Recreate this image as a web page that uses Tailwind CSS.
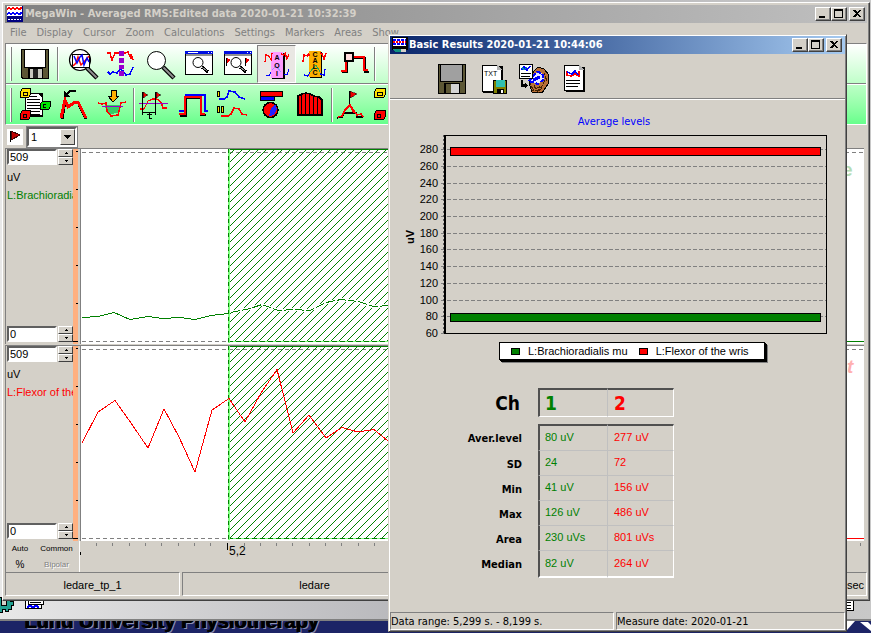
<!DOCTYPE html>
<html lang="en">
<head>
<meta charset="utf-8">
<title>MegaWin</title>
<script src="https://cdn.jsdelivr.net/npm/@tailwindcss/browser@4"></script>
</head>
<body class="font-['Liberation_Sans',Arial,sans-serif] text-[11px] leading-4 text-black">
<div class="relative min-h-screen overflow-hidden bg-[#1c2466]">

<!-- Window behind the main one -->
<div class="absolute inset-0 flex flex-col">
  <div class="flex flex-1 items-end justify-between border-b-2 border-[#808080] bg-linear-to-r from-[#e8e8e8] via-[#b4b4b8] to-[#c8c8c8] pb-1.5">
    <svg class="h-4 w-12" viewBox="0 598 48 16" shape-rendering="crispEdges" aria-hidden="true">
      <g fill="#20a090" stroke="#000"><path d="M-4 598H10V602H13V606H11V610H8V612H5V610H2V613H-2z"/></g><rect x="1" y="599" width="5" height="7" fill="#d4d0c8" stroke="#000"/>
      <rect x="25" y="598" width="16" height="11" fill="#fff" stroke="#000"/><path d="M28 601H43V605H28z" fill="#fff" stroke="#000"/><path d="M30 603H41" stroke="#000"/><path d="M27 608l3-1 3 1 3-1 3 1" stroke="#00f" fill="none" stroke-width="2"/>
    </svg>
    <svg class="mr-4 h-4 w-3" viewBox="0 0 12 16" shape-rendering="crispEdges" aria-hidden="true"><rect x="1" y="1" width="9" height="12" fill="#fff" stroke="#000"/><path d="M3 5H8M3 8H8M3 11H8" stroke="#000"/><path d="M3 3H6" stroke="#20a090"/></svg>
  </div>
  <div class="relative h-3 overflow-hidden">
    <p class="absolute bottom-0.5 left-6 whitespace-nowrap text-[20px] leading-5 font-bold text-black [text-shadow:1px_0_#000,2px_1px_#ffffff80]">Lund University Physiotherapy</p>
    <svg class="absolute right-0 top-0 h-3 w-7" viewBox="0 0 28 12" aria-hidden="true"><path d="M0 0h12L4 9 0 5z" fill="#fff"/><path d="M17 1h8l3 3v6z" fill="#fff"/></svg>
  </div>
</div>

<!-- Main window -->
<main class="absolute top-0.5 right-px bottom-8 left-0.5 flex flex-col border border-t-white border-r-[#404040] border-b-[#404040] border-l-white bg-[#d4d0c8] p-0.5 shadow-[inset_-1px_-1px_#808080]">
  <header class="flex h-[18px] shrink-0 items-center bg-linear-to-r from-[#808080] to-[#c0c0c0] px-0.5">
    <svg class="mr-0.5 size-4" viewBox="0 0 16 16" shape-rendering="crispEdges" aria-hidden="true"><rect width="16" height="16" fill="#000080"/><rect x="0" y="0" width="15" height="10" fill="#fff"/><path d="M0 3l2-1 2 1 2-1 2 1 2-1 2 1 3-1" stroke="#f00" stroke-width="2" fill="none"/><path d="M0 8l2-1 2 1 2-1 2 1 2-1 2 1 3-1" stroke="#00f" stroke-width="2" fill="none"/><path d="M1 13H14" stroke="#fff" stroke-dasharray="2 1"/></svg>
    <h1 class="flex-1 whitespace-nowrap font-['DejaVu_Sans_Condensed','DejaVu_Sans',sans-serif] text-[11px] font-bold text-[#d4d0c8]">MegaWin - Averaged RMS:Edited data 2020-01-21 10:32:39</h1>
    <button aria-label="Minimize" class="h-3.5 w-4 border border-t-white border-r-[#404040] border-b-[#404040] border-l-white bg-[#d4d0c8] shadow-[inset_-1px_-1px_#808080]"><svg class="block h-3 w-3.5" viewBox="0 0 14 12" shape-rendering="crispEdges"><path d="M3 8h6v2H3z"/></svg></button>
    <button aria-label="Maximize" class="mr-0.5 h-3.5 w-4 border border-t-white border-r-[#404040] border-b-[#404040] border-l-white bg-[#d4d0c8] shadow-[inset_-1px_-1px_#808080]"><svg class="block h-3 w-3.5" viewBox="0 0 14 12" shape-rendering="crispEdges"><path fill-rule="evenodd" d="M2 1h9v9H2zM3 3v6h7V3z"/></svg></button>
    <button aria-label="Close" class="h-3.5 w-4 border border-t-white border-r-[#404040] border-b-[#404040] border-l-white bg-[#d4d0c8] shadow-[inset_-1px_-1px_#808080]"><svg class="block h-3 w-3.5" viewBox="0 0 14 12" shape-rendering="crispEdges"><path d="M3 2h2l2 2 2-2h2L8 5.500l3 3.500H9L7 7 5 9H3l3-3.500z"/></svg></button>
  </header>
  <nav class="flex h-5 shrink-0 items-center gap-2.5 px-[5px] font-['DejaVu_Sans_Condensed','DejaVu_Sans',sans-serif] text-[11px] text-[#808080]">
    <a href="#">File</a><a href="#">Display</a><a href="#">Cursor</a><a href="#">Zoom</a><a href="#">Calculations</a><a href="#">Settings</a><a href="#">Markers</a><a href="#">Areas</a><a href="#">Show</a>
  </nav>

  <div class="shrink-0 border border-t-[#808080] border-r-white border-b-white border-l-[#808080] bg-linear-to-b from-white to-[#66ff8c]">
    <div class="flex h-[39px] items-center pl-1">
      <span class="mr-[3px] h-[34px] w-0.5 border-r border-l border-r-[#808080] border-l-white"></span>
      <button aria-label="Save"><svg class="block h-[38px] w-[39px]" viewBox="15 45 39 38" shape-rendering="crispEdges"><path d="M21 49H49V79H22L21 78z"/><path d="M22 50H48V78H23L22 77z" fill="#5c5735"/><path d="M24 49H46V68H24z"/><path d="M25 50H45V67H25z" fill="#fff"/><path d="M28 68H43V79H28z"/><path d="M30 69H42V78H30z" fill="#c8c8c0"/><path d="M33 69H38V78H33z" fill="#222"/></svg></button>
      <span class="mx-[3px] h-[34px] w-0.5 border-r border-l border-r-white border-l-[#808080]"></span>
      <button aria-label="Zoom signal"><svg class="block h-[38px] w-[39px]" viewBox="62 45 39 38"><circle cx="80" cy="60" r="10.500" fill="#fff" stroke="#000" stroke-width="1.200"/><path d="M87 68l10 10" stroke="#000" stroke-width="4.500"/><path d="M87 68l9.500 9.500" stroke="#909090" stroke-width="2"/><rect x="72.500" y="54.500" width="17" height="13" fill="#fff" stroke="#000"/><path d="M73 66l3-3 2-6 3 8 3-3 5-6" stroke="#f00" fill="none" stroke-width="1.500"/><path d="M74 56l3 7 3-6 2-2 2 10 3-7 2 4" stroke="#00f" fill="none" stroke-width="1.500"/></svg></button>
      <button aria-label="Signals"><svg class="block h-[38px] w-[39px]" viewBox="101 45 39 38" shape-rendering="crispEdges"><path d="M107 53l3 0 2 7 3-7h4l3-1 3 1 3-1 3 7v-5l2 6" stroke="#f00" fill="none" stroke-width="1.500"/><path d="M108 72l2 2 3-2 4 1 3-4 3 2 3 4 4-1 3-7" stroke="#00f" fill="none" stroke-width="1.500"/><path d="M119 51h5v5h-5zM119 58h5v5h-5zM119 65h5v4h-5zM119 71h5v5h-5z" fill="#9900cc"/></svg></button>
      <button aria-label="Zoom"><svg class="block h-[38px] w-[39px]" viewBox="140 45 39 38"><circle cx="156.500" cy="60.500" r="9" fill="#fff" stroke="#000"/><path d="M163 67l11 11" stroke="#000" stroke-width="4.500"/><path d="M163.500 67.500l10 10" stroke="#909090" stroke-width="2"/></svg></button>
      <button aria-label="Zoom window"><svg class="block h-[38px] w-[39px]" viewBox="179 45 39 38" shape-rendering="crispEdges"><path d="M185 51h28v24h-28z"/><path d="M186 55h26v19h-26z" fill="#fff"/><path d="M185 51h28v3h-28z" fill="#0010e0"/><path d="M186 54h26v2h-26z" fill="#909090"/><path d="M208 52h1v1h-1zM211 52h1v1h-1zM188 52h10v1h-10z" fill="#fff"/><circle cx="198" cy="62.500" r="5" fill="#fff" stroke="#000" shape-rendering="auto"/><path d="M202 67l6 5" stroke="#000" stroke-width="3"/><path d="M202 67l5 4" stroke="#888"/></svg></button>
      <button aria-label="Zoom markers"><svg class="block h-[38px] w-[39px]" viewBox="218 45 39 38" shape-rendering="crispEdges"><path d="M224 51h28v24h-28z"/><path d="M225 55h26v19h-26z" fill="#fff"/><path d="M224 51h28v3h-28z" fill="#0010e0"/><path d="M225 54h26v2h-26z" fill="#909090"/><path d="M247 52h1v1h-1zM250 52h1v1h-1z" fill="#fff"/><circle cx="236" cy="62.500" r="5" fill="#fff" stroke="#000" shape-rendering="auto"/><path d="M240 67l6 5" stroke="#000" stroke-width="3"/><path d="M240 67l5 4" stroke="#888"/><path d="M226.500 58v8M245.500 58v8" stroke="#000"/><path d="M227 58l4 2-4 3zM246 58l4 2-4 3z" fill="#e00"/></svg></button>
      <button aria-label="AOI" aria-pressed="true" class="border border-t-[#808080] border-r-white border-b-white border-l-[#808080] bg-[#e9e7e3]"><svg class="block h-9 w-[37px]" viewBox="258 46 37 36" shape-rendering="crispEdges"><path d="M272 53h13v26h-13z"/><path d="M271 52h12v26h-12z" fill="#ff99ff"/><path d="M265 62l1-7 3 1 2 4 1-7M281 54l3 1 1-2 2 6 2-5" stroke="#f00" fill="none" stroke-width="1.300"/><path d="M266 75l3 1 2-4M284 74l3 1 2-6" stroke="#00f" fill="none"/><path d="M272 70l4-4 5 6" stroke="#99f" fill="none"/><g font-size="7" font-weight="bold" text-anchor="middle"><text x="277" y="60">A</text><text x="277" y="68">O</text><text x="277" y="76">I</text></g></svg></button>
      <button aria-label="Calc"><svg class="block h-[38px] w-[39px]" viewBox="296 45 39 38" shape-rendering="crispEdges"><path d="M310 52h12v26h-12z"/><path d="M309 51h12v26h-12z" fill="#ffb000"/><path d="M303 62l1-7 4 1M308 54l2 2M320 53l2 1 2 5 2-6" stroke="#f00" fill="none" stroke-width="1.500"/><path d="M304 75l4 1 2-4M320 74l4 1 1-6" stroke="#00f" fill="none" stroke-width="1.300"/><path d="M310 72l6-7 4 7" stroke="#2a5" fill="none"/><g font-size="7" font-weight="bold" text-anchor="middle"><text x="315" y="57">C</text><text x="315" y="63">A</text><text x="315" y="69">L</text><text x="315" y="75">C</text></g></svg></button>
      <button aria-label="Edit level"><svg class="block h-[38px] w-[39px]" viewBox="335 45 39 38" shape-rendering="crispEdges"><path d="M342 72h5V58h18v14h4" stroke="#000" stroke-width="2" fill="none"/><path d="M341 71h5V57h18v13h4" stroke="#f00" stroke-width="2" fill="none"/><path d="M345 53h8v8h-8z" fill="#fdd" stroke="#000" stroke-width="2"/></svg></button>
      <span class="h-[34px] w-0.5 border-r border-l border-r-white border-l-[#808080]"></span>
    </div>
    <div class="h-0.5 border-t border-b border-t-[#808080] border-b-white"></div>
    <div class="flex h-[39px] items-center pl-1">
      <span class="mr-[3px] h-[34px] w-0.5 border-r border-l border-r-[#808080] border-l-white"></span>
      <button aria-label="Report"><svg class="block h-[38px] w-[39px]" viewBox="15 86 39 38" shape-rendering="crispEdges"><path d="M26 93h17v24H26z"/><path d="M25.500 93.500h13l4 4v18h-17z" fill="#fff" stroke="#000"/><path d="M27 96.500h10M27 99.500h13M27 102.500h13M27 105.500h13M27 108.500h13M27 111.500h13M27 114.500h13" stroke="#000"/><path d="M20.500 91.500l2-3h8v6l-2 3h-8z" fill="#ffe000" stroke="#000"/><path d="M23 92.500h4v3h-4z" fill="none" stroke="#000"/><path d="M40.500 103.500l2-2h8v5l-2 3h-8z" fill="#00e800" stroke="#000"/><path d="M46 104.500h-3v3h3" fill="none" stroke="#000"/><path d="M20.500 113.500l2-3h8v6l-2 3h-8z" fill="#f00" stroke="#000"/><path d="M23 114.500h3v3h-3z" fill="none" stroke="#000"/></svg></button>
      <button aria-label="Slope"><svg class="block h-[38px] w-[39px]" viewBox="54 86 39 38" shape-rendering="crispEdges"><path d="M62 119l3-18 3 6 7-5h3l8 17" stroke="#000" stroke-width="3" fill="none"/><path d="M61 118l4-18 3 7 7-5h3l8 16" stroke="#f00" stroke-width="3" fill="none"/><path d="M76 91h-6l-4 4" stroke="#000" stroke-width="2" fill="none"/><path d="M64 91v6h7z"/></svg></button>
      <button aria-label="Import dip"><svg class="block h-[38px] w-[39px]" viewBox="93 86 39 38" shape-rendering="crispEdges"><path d="M105 105h15l-2 8-9 1-3-3z" fill="#3c6"/><path d="M98 103l4 1 4-1 1 8 4 5 7-1 3-12 5-1" stroke="#f00" fill="none" stroke-width="1.500"/><path d="M102 106.500h21" stroke="#90c"/><path d="M111 90h5v6h3l-6 6-5-6h3z" fill="#ffb000" stroke="#000"/></svg></button>
      <span class="mr-0.5 ml-px h-[34px] w-0.5 border-r border-l border-r-white border-l-[#808080]"></span>
      <button aria-label="Interval"><svg class="block h-[38px] w-[39px]" viewBox="137 86 39 38" shape-rendering="crispEdges"><path d="M140 109h4l4-8 5-2h4l4 3 2 6h4" stroke="#f00" fill="none" stroke-width="1.300"/><path d="M139 103.500h29" stroke="#90c"/><path d="M142.500 92v23M155.500 92v23M142 112.500h13M149 113v5M147 114h5M149 118h3" stroke="#000" fill="none"/><path d="M143 92l5 3-5 3zM156 92l5 3-5 3z" fill="#e00" stroke="#000" stroke-width=".5"/></svg></button>
      <button aria-label="Compare levels"><svg class="block h-[38px] w-[39px]" viewBox="176 86 39 38" shape-rendering="crispEdges"><path d="M179 111h4l3-1V95h19v16h3" stroke="#00f" stroke-width="2" fill="none"/><path d="M180 116h6V98h15v17h5" stroke="#000" stroke-width="2" fill="none"/><path d="M179 114h6V97h16v17h4" stroke="#f00" stroke-width="1.500" fill="none"/></svg></button>
      <button aria-label="Split curves"><svg class="block h-[38px] w-[39px]" viewBox="215 86 39 38" shape-rendering="crispEdges"><path d="M219 99h5l3-2 2-6 6 1 4 5 6 2" stroke="#00f" fill="none" stroke-width="1.500"/><path d="M221 116h7l3-2 3-6 5 1 3 5 5 1" stroke="#f00" fill="none" stroke-width="1.500"/><path d="M217.500 91.500h2v5h-2zM217.500 106.500h2v6h-2zM221.500 106.500h2v6h-2z" fill="#ffe000" stroke="#000"/></svg></button>
      <button aria-label="Pie chart"><svg class="block h-[38px] w-[39px]" viewBox="254 86 39 38" shape-rendering="crispEdges"><path d="M260.500 91.500h22v5h-22z" fill="#f00" stroke="#000"/><path d="M260.500 96.500h14v4h-14z" fill="#00f" stroke="#000"/><circle cx="270.500" cy="110" r="7.500" fill="#f00" stroke="#000" stroke-width="1.500"/><path d="M269 116l2-8 4-4 2 5-3 6z" fill="#22f"/></svg></button>
      <button aria-label="Histogram"><svg class="block h-[38px] w-[38px]" viewBox="293 86 38 38" shape-rendering="crispEdges"><path d="M298 115V96l4-2 4-1 4 1 4 2 5 1 3 3v15z" fill="#f00" stroke="#000" stroke-width="1.500"/><path d="M301.500 95v20M305.500 94v21M309.500 94v21M313.500 96v19M317.500 97v18" stroke="#000"/></svg></button>
      <span class="mr-px h-[34px] w-0.5 border-r border-l border-r-white border-l-[#808080]"></span>
      <button aria-label="Marker peak"><svg class="block h-[38px] w-[39px]" viewBox="334 86 39 38" shape-rendering="crispEdges"><path d="M337 118l5-1 2-4 4 0M348 113h8l1 4h6" stroke="#000" fill="none" stroke-width="1.500"/><path d="M338 117l4-1 3-6 5-5 4 6 3 4 4-1 2 3M350 105l4 8" stroke="#f00" fill="none" stroke-width="1.500"/><path d="M349.500 91v13" stroke="#000"/><path d="M350 91l7 3-7 4z" fill="#e00" stroke="#000" stroke-width=".5"/></svg></button>
      <button aria-label="Channels"><svg class="block h-[38px] w-[39px]" viewBox="373 86 39 38" shape-rendering="crispEdges"><path d="M374.500 91.500l2-3h9v6l-2 3h-9z" fill="#ffe000" stroke="#000"/><path d="M377 92.500h5v3h-5z" fill="none" stroke="#000"/><path d="M374.500 113.500l2-3h9v6l-2 3h-9z" fill="#f00" stroke="#000"/><path d="M377 114.500h3v3h-3z" fill="none" stroke="#000"/></svg></button>
    </div>
  </div>

  <div class="flex h-[23px] shrink-0 items-center pl-0.5">
    <button aria-label="Marker" class="mr-1 bg-white"><svg class="block size-4" viewBox="0 0 16 16" shape-rendering="crispEdges"><path d="M3.500 2v11" stroke="#000"/><path d="M4 2l9 4-9 5z" fill="#c00000" stroke="#400"/></svg></button>
    <label class="relative block">
      <span class="sr-only">Marker number</span>
      <select class="h-5 w-[50px] appearance-none border-2 border-t-[#606060] border-r-white border-b-white border-l-[#606060] bg-white pl-0.5 text-[11px] leading-4 outline-1 outline-[#808080]"><option>1</option></select>
      <svg class="pointer-events-none absolute top-0.5 right-0.5 h-4 w-[15px] border border-t-white border-r-[#404040] border-b-[#404040] border-l-white bg-[#d4d0c8]" viewBox="0 0 13 14" shape-rendering="crispEdges" aria-hidden="true"><path d="M3 5h7v1H9v1H8v1H7v1H6V8H5V7H4V6H3z"/></svg>
    </label>
  </div>

  <section class="flex min-h-0 flex-1 flex-col gap-px pr-[3px]">
    <!-- Channel 1 -->
    <div class="flex min-h-0 flex-1">
      <div class="flex w-[75px] shrink-0 border-t border-l border-[#808080] pl-px">
        <div class="flex min-w-0 flex-1 flex-col pb-0.5">
          <div class="flex gap-px">
            <input aria-label="Channel 1 maximum" value="509" class="h-4 w-[50px] border-2 border-t-[#606060] border-r-white border-b-white border-l-[#606060] bg-white px-px">
            <div class="flex w-[15px] flex-col">
              <button aria-label="Increase" class="h-2 border border-t-white border-r-[#404040] border-b-[#404040] border-l-white"><svg class="mx-auto block h-1.5 w-3" viewBox="0 0 12 6" shape-rendering="crispEdges"><path d="M6 2h1v1h1v1H5V3h1z"/></svg></button>
              <button aria-label="Decrease" class="h-2 border border-t-white border-r-[#404040] border-b-[#404040] border-l-white"><svg class="mx-auto block h-1.5 w-3" viewBox="0 0 12 6" shape-rendering="crispEdges"><path d="M5 2h3v1H7v1H6V3H5z"/></svg></button>
            </div>
          </div>
          <p class="mt-[3px] leading-[18px]">uV</p>
          <p class="flex-1 overflow-hidden leading-[18px] whitespace-nowrap text-[#008000]">L:Brachioradialis mu</p>
          <div class="flex gap-px">
            <input aria-label="Channel 1 minimum" value="0" class="h-4 w-[50px] border-2 border-t-[#606060] border-r-white border-b-white border-l-[#606060] bg-white px-px">
            <div class="flex w-[15px] flex-col">
              <button aria-label="Increase" class="h-2 border border-t-white border-r-[#404040] border-b-[#404040] border-l-white"><svg class="mx-auto block h-1.5 w-3" viewBox="0 0 12 6" shape-rendering="crispEdges"><path d="M6 2h1v1h1v1H5V3h1z"/></svg></button>
              <button aria-label="Decrease" class="h-2 border border-t-white border-r-[#404040] border-b-[#404040] border-l-white"><svg class="mx-auto block h-1.5 w-3" viewBox="0 0 12 6" shape-rendering="crispEdges"><path d="M5 2h3v1H7v1H6V3H5z"/></svg></button>
            </div>
          </div>
        </div>
        <div class="mr-0.5 flex w-[5px] flex-col items-end justify-between bg-[#ffb080] py-0.5"><i class="h-px w-0.5 bg-black"></i><i class="h-px w-0.5 bg-black"></i><i class="h-px w-0.5 bg-black"></i><i class="h-px w-0.5 bg-black"></i><i class="h-px w-0.5 bg-black"></i><i class="h-px w-full bg-black"></i></div>
      </div>
      <div class="min-w-0 flex-1 border-t border-l border-[#808080] bg-white">
        <svg class="block h-full w-full" shape-rendering="crispEdges" role="img" aria-label="Channel 1 signal">
          <defs><pattern id="hatch" width="8" height="8" patternUnits="userSpaceOnUse"><path d="M0 7h1v1H0zM1 6h1v1H1zM2 5h1v1H2zM3 4h1v1H3zM4 3h1v1H4zM5 2h1v1H5zM6 1h1v1H6zM7 0h1v1H7z" fill="#008000"/></pattern></defs>
          <g transform="translate(-81 -149)" fill="none">
            <path d="M82 152.500H864M82 341.500H864" stroke="#808080" stroke-dasharray="4 3"/>
            <rect x="228" y="149" width="400" height="193" fill="url(#hatch)"/>
            <path d="M228 149.500H628" stroke="#008000"/><path d="M228 341.500H628" stroke="#80ff80"/><path d="M228 341.500H628" stroke="#008000" stroke-dasharray="5 3"/>
            <path d="M228.500 149V343" stroke="#80ff80" stroke-width="2"/><path d="M228.500 149V343" stroke="#008000" stroke-dasharray="4 3"/>
            <path d="M82 317.500L98 316.500 114 312.500 130 319.500 148 316.500 163 318.500 180 317.500 195 319.500 211 315.500 228 313.500" stroke="#008000"/>
            <path d="M231 312.500L250 308.500 262 304.500 278 310.500 294 309.500 310 310.500 326 302.500 341 299.500 358 301.500 374 306.500 390 305.500" stroke="#fff" stroke-width="3"/>
            <path d="M231 312.500L250 308.500 262 304.500 278 310.500 294 309.500 310 310.500 326 302.500 341 299.500 358 301.500 374 306.500 390 305.500" stroke="#008000" stroke-dasharray="9 2"/>
            <path d="M840 341.500H864" stroke="#008000"/>
            <text x="842" y="176" font-size="19" font-weight="bold" fill="#b4dcb4">e</text>
          </g>
        </svg>
      </div>
    </div>
    <!-- Channel 2 -->
    <div class="flex min-h-0 flex-1">
      <div class="flex w-[75px] shrink-0 border-t border-l border-[#808080] pl-px">
        <div class="flex min-w-0 flex-1 flex-col pb-0.5">
          <div class="flex gap-px">
            <input aria-label="Channel 2 maximum" value="509" class="h-4 w-[50px] border-2 border-t-[#606060] border-r-white border-b-white border-l-[#606060] bg-white px-px">
            <div class="flex w-[15px] flex-col">
              <button aria-label="Increase" class="h-2 border border-t-white border-r-[#404040] border-b-[#404040] border-l-white"><svg class="mx-auto block h-1.5 w-3" viewBox="0 0 12 6" shape-rendering="crispEdges"><path d="M6 2h1v1h1v1H5V3h1z"/></svg></button>
              <button aria-label="Decrease" class="h-2 border border-t-white border-r-[#404040] border-b-[#404040] border-l-white"><svg class="mx-auto block h-1.5 w-3" viewBox="0 0 12 6" shape-rendering="crispEdges"><path d="M5 2h3v1H7v1H6V3H5z"/></svg></button>
            </div>
          </div>
          <p class="mt-[3px] leading-[18px]">uV</p>
          <p class="flex-1 overflow-hidden leading-[18px] whitespace-nowrap text-[#ff0000]">L:Flexor of the wris</p>
          <div class="flex gap-px">
            <input aria-label="Channel 2 minimum" value="0" class="h-4 w-[50px] border-2 border-t-[#606060] border-r-white border-b-white border-l-[#606060] bg-white px-px">
            <div class="flex w-[15px] flex-col">
              <button aria-label="Increase" class="h-2 border border-t-white border-r-[#404040] border-b-[#404040] border-l-white"><svg class="mx-auto block h-1.5 w-3" viewBox="0 0 12 6" shape-rendering="crispEdges"><path d="M6 2h1v1h1v1H5V3h1z"/></svg></button>
              <button aria-label="Decrease" class="h-2 border border-t-white border-r-[#404040] border-b-[#404040] border-l-white"><svg class="mx-auto block h-1.5 w-3" viewBox="0 0 12 6" shape-rendering="crispEdges"><path d="M5 2h3v1H7v1H6V3H5z"/></svg></button>
            </div>
          </div>
        </div>
        <div class="mr-0.5 flex w-[5px] flex-col items-end justify-between bg-[#ffb080] py-0.5"><i class="h-px w-0.5 bg-black"></i><i class="h-px w-0.5 bg-black"></i><i class="h-px w-0.5 bg-black"></i><i class="h-px w-0.5 bg-black"></i><i class="h-px w-0.5 bg-black"></i><i class="h-px w-full bg-black"></i></div>
      </div>
      <div class="min-w-0 flex-1 border-t border-l border-[#808080] bg-white">
        <svg class="block h-full w-full" shape-rendering="crispEdges" role="img" aria-label="Channel 2 signal">
          <g transform="translate(-81 -346)" fill="none">
            <path d="M82 349.500H864M82 538.500H864" stroke="#808080" stroke-dasharray="4 3"/>
            <rect x="228" y="346" width="400" height="193" fill="url(#hatch)"/>
            <path d="M228 346.500H628" stroke="#008000"/><path d="M228 538.500H628" stroke="#80ff80"/><path d="M228 538.500H628" stroke="#008000" stroke-dasharray="5 3"/>
            <path d="M228.500 346V540" stroke="#80ff80" stroke-width="2"/><path d="M228.500 346V540" stroke="#008000" stroke-dasharray="4 3"/>
            <path d="M82 443L98 412 115 400.500 131 423 148 448 164 409 179 437 195 472 212 410 229 398.500 245 422 261 393 277 369.500 293 433 309 415 326 438 342 427.500 358 432 374 429.500 388 441" stroke="#f00"/>
            <path d="M840 538.500H864" stroke="#f00"/>
            <text x="847" y="373" font-size="19" font-weight="bold" font-style="italic" fill="#ffb0b0">t</text>
          </g>
        </svg>
      </div>
    </div>
  </section>

  <div class="flex h-[31px] shrink-0">
    <div class="grid w-[75px] shrink-0 grid-cols-[28px_1fr] border-r border-l border-r-white border-l-[#808080] text-center text-[8px] leading-[15px]">
      <button>Auto</button><button>Common</button>
      <button class="text-[10px]">%</button><button disabled class="text-[#808080] [text-shadow:1px_1px_#fff]">Bipolar</button>
    </div>
    <svg class="block h-full min-w-0 flex-1" shape-rendering="crispEdges" role="img" aria-label="Time axis">
      <g transform="translate(-80 -541)">
        <path d="M96.500 543v3M112.500 543v3M129.500 543v3M145.500 543v3M161.500 543v3M178.500 543v3M194.500 543v3M210.500 543v3M244.500 543v3M260.500 543v3M276.500 543v3M292.500 543v3M309.500 543v3M325.500 543v3M341.500 543v3M358.500 543v3M374.500 543v3M860.500 543v3" stroke="#808080"/>
        <path d="M227.500 543v7M80.500 552v3" stroke="#000"/>
        <text x="229" y="555" font-size="12">5,2</text>
      </g>
    </svg>
  </div>
  <footer class="flex h-[26px] shrink-0 gap-0.5 pb-0.5 text-center leading-6">
    <span class="w-[175px] shrink-0 border border-t-[#808080] border-r-white border-b-white border-l-[#808080]">ledare_tp_1</span>
    <span class="w-[265px] shrink-0 border border-t-[#808080] border-r-white border-b-white border-l-[#808080]">ledare</span>
    <span class="flex-1 border border-t-[#808080] border-r-white border-b-white border-l-[#808080] pr-0.5 text-right">sec</span>
  </footer>
</main>

<!-- Results dialog -->
<section role="dialog" aria-labelledby="dialog-title" class="absolute top-[34px] right-6 bottom-px left-[388px] flex flex-col border border-t-[#d4d0c8] border-r-[#404040] border-b-[#404040] border-l-[#d4d0c8] bg-[#d4d0c8] p-px shadow-[inset_1px_1px_#fff,inset_-1px_-1px_#808080]">
  <header class="flex h-[18px] shrink-0 items-center bg-linear-to-r from-[#0a246a] to-[#a6caf0] pr-[3px] pl-0.5">
    <svg class="mr-px size-4" viewBox="0 0 16 16" shape-rendering="crispEdges" aria-hidden="true"><path d="M0 0h16v13H0z"/><path d="M1 1h13v8H1z" fill="#fff"/><path d="M1 3h13M1 7h13" stroke="#00f" stroke-width="1.500" stroke-dasharray="3 1"/><path d="M1 5h13" stroke="#f00" stroke-width="2" stroke-dasharray="2 1"/><path d="M1 12h9l3 3H3z" fill="#109080"/><path d="M9 12h5v3H9z" fill="#d4d0c8"/></svg>
    <h2 id="dialog-title" class="flex-1 whitespace-nowrap font-['DejaVu_Sans_Condensed','DejaVu_Sans',sans-serif] text-[11px] font-bold text-white">Basic Results 2020-01-21 10:44:06</h2>
    <button aria-label="Minimize" class="h-3.5 w-4 border border-t-white border-r-[#404040] border-b-[#404040] border-l-white bg-[#d4d0c8] shadow-[inset_-1px_-1px_#808080]"><svg class="block h-3 w-3.5" viewBox="0 0 14 12" shape-rendering="crispEdges"><path d="M3 8h6v2H3z"/></svg></button>
    <button aria-label="Maximize" class="mr-0.5 h-3.5 w-4 border border-t-white border-r-[#404040] border-b-[#404040] border-l-white bg-[#d4d0c8] shadow-[inset_-1px_-1px_#808080]"><svg class="block h-3 w-3.5" viewBox="0 0 14 12" shape-rendering="crispEdges"><path fill-rule="evenodd" d="M2 1h9v9H2zM3 3v6h7V3z"/></svg></button>
    <button aria-label="Close" class="h-3.5 w-4 border border-t-white border-r-[#404040] border-b-[#404040] border-l-white bg-[#d4d0c8] shadow-[inset_-1px_-1px_#808080]"><svg class="block h-3 w-3.5" viewBox="0 0 14 12" shape-rendering="crispEdges"><path d="M3 2h2l2 2 2-2h2L8 5.500l3 3.500H9L7 7 5 9H3l3-3.500z"/></svg></button>
  </header>
  <div class="flex h-[46px] shrink-0 border-b border-white pl-[42px] shadow-[inset_0_-1px_#808080]">
    <button aria-label="Save results"><svg class="block h-11 w-[41px]" viewBox="432 54 41 44" shape-rendering="crispEdges"><path d="M438 63h28v30h-28z"/><path d="M439 64h26v28h-26z" fill="#5c5735"/><path d="M440 63h23v18h-23z"/><path d="M441 64h21v16h-21z" fill="#a0a0a0"/><path d="M444 82h16v11h-16z"/><path d="M446 83h13v9h-13z" fill="#5c5735"/><path d="M451 83h8v9h-8z" fill="#d4d4d4"/></svg></button>
    <button aria-label="Save as text"><svg class="block h-11 w-[41px]" viewBox="473 54 41 44" shape-rendering="crispEdges"><path d="M483 65h20v27h-20z"/><path d="M482.500 64.500h15l4 4v22h-19z" fill="#fff" stroke="#000"/><path d="M497 64v5h5z" fill="#b0b0b0"/><text x="484" y="75" font-size="7">TXT</text><path d="M493.500 79.500h13v13h-13z" fill="#808000" stroke="#000"/><path d="M496 79h9v7h-9z" fill="#30c0b0"/><path d="M497 88h7v5h-7z"/><path d="M501 89h2v3h-2z" fill="#fff"/></svg></button>
    <button aria-label="Copy to basket"><svg class="block h-11 w-[41px]" viewBox="514 54 41 44" shape-rendering="crispEdges"><path d="M529 82l5-12 4-4 6 2 5 6-1 9-6 9-10-1z" fill="#b87038" stroke="#000"/><path d="M530 82l4 8M534 84l4 7M540 85l-2 7M546 76l-6 14M544 72l3 8M531 86h11M532 89h9" stroke="#402000" stroke-dasharray="2 1" fill="none"/><path d="M529 80l8-9 5 1 2 6-6 5z" fill="#e8e8ff" stroke="#00f" stroke-width="2" stroke-dasharray="4 2"/><path d="M533 79l7-3" stroke="#00f" stroke-width="3"/><path d="M519.500 63.500h13v14h-13z" fill="#fff" stroke="#000"/><path d="M521 69l3-3 3 3 3-4" stroke="#00f" fill="none" stroke-width="1.500"/><path d="M522 66l2 3 3-3" stroke="#0a9" fill="none"/><path d="M521 72.500h10M521 75.500h9" stroke="#000"/><path d="M521 79h2v4h2v-2l3 3.500-3 3.500v-2h-4z"/></svg></button>
    <button aria-label="Report"><svg class="block h-11 w-[41px]" viewBox="555 54 41 44" shape-rendering="crispEdges"><path d="M566 66h19v25h-19z"/><path d="M564.500 64.500h15l4 4v21h-19z" fill="#fff" stroke="#000"/><path d="M579 64v5h5z" fill="#b0b0b0"/><path d="M567 70v4l4 1 4-2 4 2v-5" stroke="#f00" fill="none" stroke-width="1.500"/><path d="M567 71l5 2 3-3 3 4" stroke="#00f" fill="none" stroke-width="1.500"/><path d="M566 79.500h14M566 82.500h14M566 85.500h12" stroke="#000"/></svg></button>
  </div>

  <div class="flex min-h-0 flex-1 flex-col pt-[15px]">
    <h3 class="pr-[7px] text-center font-['DejaVu_Sans_Condensed','DejaVu_Sans',sans-serif] text-[11px] leading-[14px] text-[#0000ff]">Average levels</h3>
    <svg class="block h-[210px] w-full shrink-0" shape-rendering="crispEdges" role="img" aria-label="Average levels bar chart">
      <g transform="translate(-390 -129)">
        <path d="M447 149.500H826M447 166.500H826M447 183.500H826M447 199.500H826M447 216.500H826M447 233.500H826M447 249.500H826M447 266.500H826M447 283.500H826M447 300.500H826M447 316.500H826" stroke="#808080" stroke-dasharray="4 2" fill="none"/>
        <path d="M441 149.500h4M441 166.500h4M441 183.500h4M441 199.500h4M441 216.500h4M441 233.500h4M441 249.500h4M441 266.500h4M441 283.500h4M441 300.500h4M441 316.500h4M441 333.500h4" stroke="#808080"/>
        <path d="M443.500 135V334" stroke="#606060" stroke-dasharray="2 2"/>
        <rect x="445.500" y="135.500" width="381" height="198" fill="none" stroke="#000"/><path d="M445 135V334" stroke="#000" stroke-width="2"/>
        <rect x="450.500" y="147.500" width="370" height="8" fill="#f00" stroke="#000"/>
        <rect x="450.500" y="313.500" width="370" height="8" fill="#008000" stroke="#000"/>
        <g font-size="11" text-anchor="end"><text x="438" y="153">280</text><text x="438" y="170">260</text><text x="438" y="187">240</text><text x="438" y="203">220</text><text x="438" y="220">200</text><text x="438" y="237">180</text><text x="438" y="253">160</text><text x="438" y="270">140</text><text x="438" y="287">120</text><text x="438" y="304">100</text><text x="438" y="320">80</text><text x="438" y="337">60</text></g>
        <text transform="translate(414 244) rotate(-90)" font-size="11" font-weight="bold">uV</text>
      </g>
    </svg>
    <div class="mt-[3px] ml-[109px] flex w-[266px] shrink-0 items-center border border-black bg-white pl-[11px] shadow-[1px_1px_#000,2px_2px_#000,3px_3px_#808080]">
      <i class="mr-2 h-[7px] w-[9px] border border-black bg-[#008000]"></i><span class="mr-[11px]">L:Brachioradialis mu</span>
      <i class="mr-2 h-[7px] w-[9px] border border-black bg-[#ff0000]"></i><span>L:Flexor of the wris</span>
    </div>
    <table class="mt-7 w-[284px] shrink-0 table-fixed border-separate border-spacing-0 text-left">
      <colgroup><col class="w-[148px]"><col class="w-[70px]"><col class="w-[66px]"></colgroup>
      <thead>
        <tr class="h-[29px] font-['DejaVu_Sans_Condensed','DejaVu_Sans',sans-serif] text-[19px]">
          <th class="pr-[18px] text-right">Ch</th>
          <th class="border-t-2 border-r border-b border-l-2 border-t-[#505050] border-r-[#c0c0c0] border-b-white border-l-[#505050] px-[5px] text-[#008000]">1</th>
          <th class="border-t-2 border-r border-b border-t-[#505050] border-r-white border-b-white px-1.5 text-[#ff0000]">2</th>
        </tr>
        <tr class="h-[7px]"><td colspan="3" class="p-0"></td></tr>
      </thead>
      <tbody>
        <tr class="h-[27px]">
          <th class="pt-0.5 pr-4 text-right font-['DejaVu_Sans_Condensed','DejaVu_Sans',sans-serif]">Aver.level</th>
          <td class="border-t-2 border-r border-b border-l-2 border-t-[#505050] border-r-[#c0c0c0] border-b-[#c0c0c0] border-l-[#505050] px-[5px] pb-0.5 text-[#008000]">80 uV</td>
          <td class="border-t-2 border-r border-b border-t-[#505050] border-r-white border-b-[#c0c0c0] px-1.5 pb-0.5 text-[#ff0000]">277 uV</td>
        </tr>
        <tr class="h-[25px]">
          <th class="pt-0.5 pr-4 text-right font-['DejaVu_Sans_Condensed','DejaVu_Sans',sans-serif]">SD</th>
          <td class="border-r border-b border-l-2 border-r-[#c0c0c0] border-b-[#c0c0c0] border-l-[#505050] px-[5px] pb-0.5 text-[#008000]">24</td>
          <td class="border-r border-b border-r-white border-b-[#c0c0c0] px-1.5 pb-0.5 text-[#ff0000]">72</td>
        </tr>
        <tr class="h-[25px]">
          <th class="pt-0.5 pr-4 text-right font-['DejaVu_Sans_Condensed','DejaVu_Sans',sans-serif]">Min</th>
          <td class="border-r border-b border-l-2 border-r-[#c0c0c0] border-b-[#c0c0c0] border-l-[#505050] px-[5px] pb-0.5 text-[#008000]">41 uV</td>
          <td class="border-r border-b border-r-white border-b-[#c0c0c0] px-1.5 pb-0.5 text-[#ff0000]">156 uV</td>
        </tr>
        <tr class="h-[25px]">
          <th class="pt-0.5 pr-4 text-right font-['DejaVu_Sans_Condensed','DejaVu_Sans',sans-serif]">Max</th>
          <td class="border-r border-b border-l-2 border-r-[#c0c0c0] border-b-[#c0c0c0] border-l-[#505050] px-[5px] pb-0.5 text-[#008000]">126 uV</td>
          <td class="border-r border-b border-r-white border-b-[#c0c0c0] px-1.5 pb-0.5 text-[#ff0000]">486 uV</td>
        </tr>
        <tr class="h-[25px]">
          <th class="pt-0.5 pr-4 text-right font-['DejaVu_Sans_Condensed','DejaVu_Sans',sans-serif]">Area</th>
          <td class="border-r border-b border-l-2 border-r-[#c0c0c0] border-b-[#c0c0c0] border-l-[#505050] px-[5px] pb-0.5 text-[#008000]">230 uVs</td>
          <td class="border-r border-b border-r-white border-b-[#c0c0c0] px-1.5 pb-0.5 text-[#ff0000]">801 uVs</td>
        </tr>
        <tr class="h-[27px]">
          <th class="pr-4 text-right font-['DejaVu_Sans_Condensed','DejaVu_Sans',sans-serif]">Median</th>
          <td class="border-r border-b-2 border-l-2 border-r-[#c0c0c0] border-b-white border-l-[#505050] px-[5px] pb-0.5 text-[#008000]">82 uV</td>
          <td class="border-r border-b-2 border-r-white border-b-white px-1.5 pb-0.5 text-[#ff0000]">264 uV</td>
        </tr>
      </tbody>
    </table>
  </div>
  <footer class="flex h-[18px] shrink-0 gap-0.5 font-['DejaVu_Sans_Condensed','DejaVu_Sans',sans-serif] text-[11px] leading-[18px]">
    <span class="w-56 border border-t-[#808080] border-r-white border-b-white border-l-[#808080]">Data range: 5,299 s. - 8,199 s.</span>
    <span class="flex-1 border border-t-[#808080] border-r-white border-b-white border-l-[#808080]">Measure date: 2020-01-21</span>
  </footer>
</section>
</div>
</body>
</html>
